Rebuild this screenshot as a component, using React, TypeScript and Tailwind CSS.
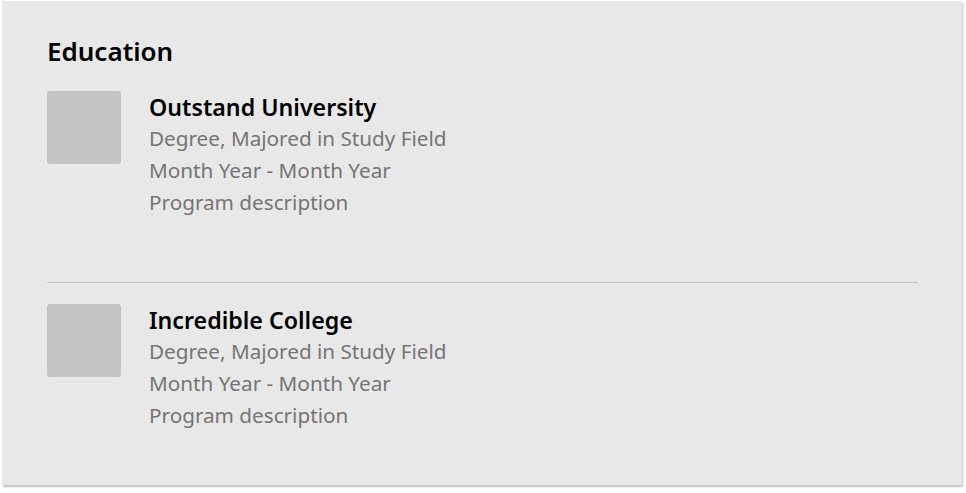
const schools = [
  { name: "Outstand University", degree: "Degree, Majored in Study Field", dates: "Month Year - Month Year", desc: "Program description" },
  { name: "Incredible College", degree: "Degree, Majored in Study Field", dates: "Month Year - Month Year", desc: "Program description" },
]

export default function App() {
  return (
    <div className="min-h-screen bg-white pl-[2px] pr-[4px] pt-[1px]" style={{ fontFamily: "'Noto Sans', sans-serif" }}>
      <div className="bg-[#e8e8e8] shadow-[1px_2px_2px_rgba(0,0,0,0.25)] pl-[45px] pr-[44px] pt-[34px] pb-[54px]">
        <h2 className="text-[26px] leading-[32px] font-semibold text-black">Education</h2>
        <div className="mt-[24px]">
          {schools.map((s, i) => (
            <div key={s.name}>
              {i > 0 && <div className="h-px bg-[#c6c6c6] mt-[64px] mb-[21px]" />}
              <div className="flex gap-[28px]">
                <div className="w-[74px] h-[73px] rounded-[3px] bg-[#c4c4c4] shrink-0" />
                <div className="pt-[2px]">
                  <div className="text-[23.2px] leading-[28px] font-semibold text-black">{s.name}</div>
                  <div className="text-[20.7px] leading-[32px] mt-[1px] text-[#757575]">{s.degree}</div>
                  <div className="text-[20.7px] leading-[32px] text-[#757575]">{s.dates}</div>
                  <div className="text-[20.7px] leading-[32px] text-[#757575]">{s.desc}</div>
                </div>
              </div>
            </div>
          ))}
        </div>
      </div>
    </div>
  )
}
